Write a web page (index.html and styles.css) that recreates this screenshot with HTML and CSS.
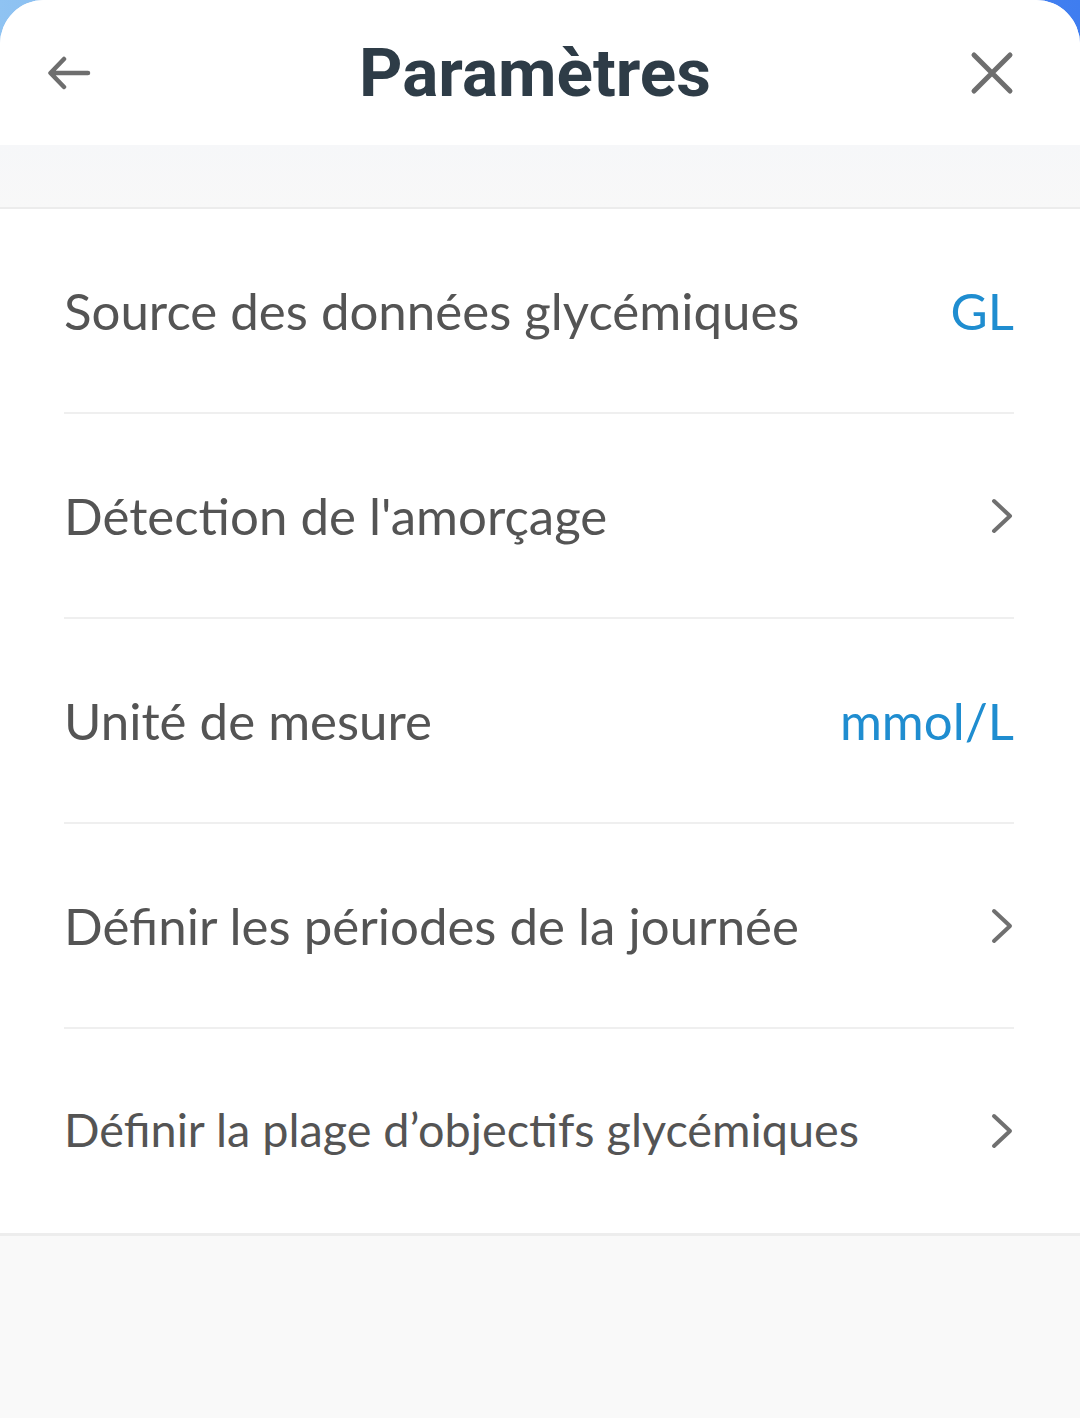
FILE: index.html
```html
<!DOCTYPE html>
<html lang="fr">
<head>
<meta charset="utf-8">
<title>Paramètres</title>
<link rel="stylesheet" href="styles.css">
</head>
<body>
<div class="sheet">
  <header class="topbar">
    <button class="icon-btn" aria-label="Retour">
      <svg width="44" height="34" viewBox="0 0 44 34"><path d="M41 17H4M17 3L3.5 17L17 31" fill="none" stroke="#6e6e6e" stroke-width="4.5" stroke-linecap="round" stroke-linejoin="round"/></svg>
    </button>
    <h1 class="title">Paramètres</h1>
    <button class="icon-btn" aria-label="Fermer">
      <svg width="44" height="44" viewBox="0 0 44 44"><path d="M4 4L40 40M40 4L4 40" fill="none" stroke="#6e6e6e" stroke-width="5" stroke-linecap="round"/></svg>
    </button>
  </header>
  <div class="band"></div>
  <ul class="list">
    <li class="row"><span class="label">Source des données glycémiques</span><span class="value">GL</span></li>
    <li class="row"><span class="label">Détection de l'amorçage</span><svg class="chev" width="22" height="36" viewBox="0 0 22 36"><path d="M3 3L19 18L3 33" fill="none" stroke="#707070" stroke-width="4" stroke-linecap="round" stroke-linejoin="round"/></svg></li>
    <li class="row"><span class="label">Unité de mesure</span><span class="value">mmol/L</span></li>
    <li class="row"><span class="label">Définir les périodes de la journée</span><svg class="chev" width="22" height="36" viewBox="0 0 22 36"><path d="M3 3L19 18L3 33" fill="none" stroke="#707070" stroke-width="4" stroke-linecap="round" stroke-linejoin="round"/></svg></li>
    <li class="row"><span class="label small">Définir la plage d’objectifs glycémiques</span><svg class="chev" width="22" height="36" viewBox="0 0 22 36"><path d="M3 3L19 18L3 33" fill="none" stroke="#707070" stroke-width="4" stroke-linecap="round" stroke-linejoin="round"/></svg></li>
  </ul>
  <div class="footer-space"></div>
</div>
</body>
</html>
```
FILE: styles.css
```css
* { box-sizing: border-box; }
html, body { margin: 0; padding: 0; }
body {
  width: 1080px;
  height: 1418px;
  overflow: hidden;
  background: linear-gradient(90deg, #8fc3f2 0%, #5b95ee 60%, #3f7df0 100%);
  font-family: "Lato", "Noto Sans", sans-serif;
}
.sheet {
  height: 1418px;
  background: #f9f9f9;
  border-radius: 44px 44px 0 0;
  overflow: hidden;
  display: flex;
  flex-direction: column;
}
.topbar {
  height: 145px;
  background: #fff;
  display: flex;
  align-items: center;
  justify-content: space-between;
  padding: 0 66px 0 46px;
}
.icon-btn {
  border: 0;
  background: none;
  padding: 0;
  width: 46px;
  display: flex;
  align-items: center;
  justify-content: center;
}
.icon-btn:last-child { width: 44px; }
.title {
  margin: 0 0 0 8px;
  font-family: "Roboto", "Liberation Sans", sans-serif;
  font-weight: 700;
  font-size: 67.5px;
  color: #2e3c47;
}
.band {
  height: 64px;
  background: linear-gradient(#f6f7f9, #f8f8f8);
  border-bottom: 2px solid #ececec;
}
.list {
  list-style: none;
  margin: 0;
  padding: 0;
  background: #fff;
  border-bottom: 3px solid #ededed;
}
.row {
  height: 205px;
  margin: 0 66px 0 64px;
  display: flex;
  align-items: center;
  justify-content: space-between;
  border-bottom: 2px solid #efefef;
}
.row:last-child { border-bottom: 0; height: 204px; }
.label {
  font-size: 51px;
  color: #545454;
}
.label.small { font-size: 46.8px; margin-top: -5px; }
.value {
  font-size: 51px;
  color: #1f8dd0;
}
.chev { margin-right: 1px; }
.footer-space {
  flex: 1;
  background: #f9f9f9;
}
```
